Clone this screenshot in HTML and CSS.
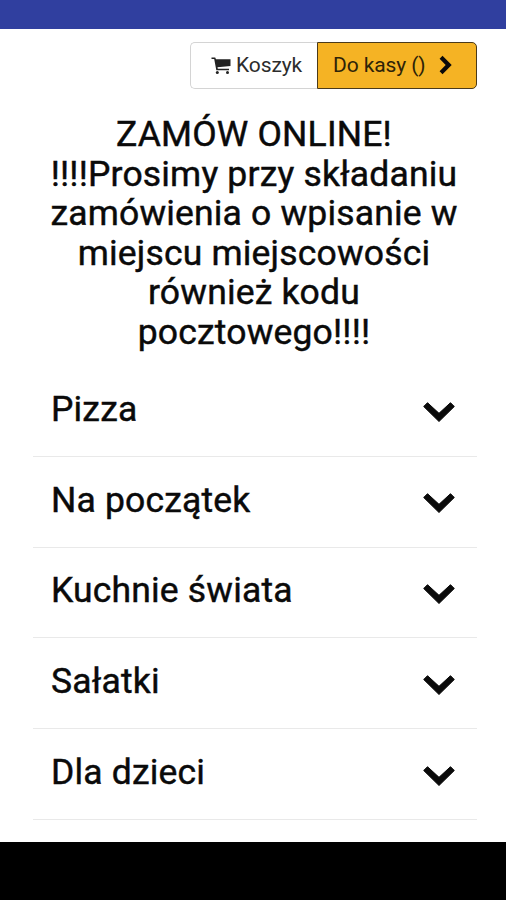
FILE: index.html
```html
<!DOCTYPE html>
<html lang="pl">
<head>
<meta charset="utf-8">
<title>Zamów online</title>
<link rel="stylesheet" href="styles.css">
</head>
<body>
<header class="status"></header>
<main class="page">
  <div class="actions">
    <button class="btn cart"><svg class="cart-icon" viewBox="0 0 20 18"><path d="M.5 .5h3.700l.8 1.700H19.500v6.800L6.500 10.300l.3 1.500H18V13.300H5.300L3.200 2H.5z"/><circle cx="6.300" cy="15.500" r="1.500"/><circle cx="16.500" cy="15.500" r="1.500"/></svg><span>Koszyk</span></button>
    <button class="btn checkout"><span>Do kasy ()</span><svg class="next" viewBox="0 0 13 20"><path d="M3.500 .8L12.700 10L3.500 19.200L.6 16.300L6.700 10L.6 3.700z"/></svg></button>
  </div>
  <h1 class="title">ZAMÓW ONLINE!<br>!!!!Prosimy przy składaniu<br>zamówienia o wpisanie w<br>miejscu miejscowości<br>również kodu<br>pocztowego!!!!</h1>
  <ul class="menu">
    <li class="item"><span>Pizza</span><svg class="chev" viewBox="0 0 32 20"><path d="M4.500 .7L16 11.300L27.500 .7L31.300 4.500L16 19.500L.7 4.500z"/></svg></li>
    <li class="item"><span>Na początek</span><svg class="chev" viewBox="0 0 32 20"><path d="M4.500 .7L16 11.300L27.500 .7L31.300 4.500L16 19.500L.7 4.500z"/></svg></li>
    <li class="item"><span>Kuchnie świata</span><svg class="chev" viewBox="0 0 32 20"><path d="M4.500 .7L16 11.300L27.500 .7L31.300 4.500L16 19.500L.7 4.500z"/></svg></li>
    <li class="item"><span>Sałatki</span><svg class="chev" viewBox="0 0 32 20"><path d="M4.500 .7L16 11.300L27.500 .7L31.300 4.500L16 19.500L.7 4.500z"/></svg></li>
    <li class="item"><span>Dla dzieci</span><svg class="chev" viewBox="0 0 32 20"><path d="M4.500 .7L16 11.300L27.500 .7L31.300 4.500L16 19.500L.7 4.500z"/></svg></li>
  </ul>
</main>
<footer class="navbar"></footer>
</body>
</html>
```
FILE: styles.css
```css
* { box-sizing: border-box; }
body { margin: 0; height: 900px; display: flex; flex-direction: column; overflow: hidden; background: #fff; color: #0a0a0a; font-family: Roboto, sans-serif; }
.status { height: 29px; flex: none; background: #303f9f; }
.page { flex: 1; min-height: 0; padding: 13px 29px 0 33px; }
.actions { display: flex; justify-content: flex-end; height: 47px; }
.btn { display: flex; align-items: center; margin: 0; font: 400 21px Roboto, sans-serif; color: #2c2c2c; height: 47px; white-space: nowrap; }
.btn span { letter-spacing: -0.1px; }
.cart { width: 127px; padding: 0 0 2px 20px; gap: 5px; background: #fff; border: 1px solid #d4d4d4; border-right: 0; border-radius: 5px 0 0 5px; }
.checkout { width: 160px; padding: 0 0 2px 15px; gap: 13px; background: #f5b324; border: 1px solid #4a3a1a; border-radius: 0 5px 5px 0; }
.checkout span { color: #2e2308; }
.cart-icon { width: 20px; height: 18px; flex: none; margin-top: 3px; fill: #222; }
.next { width: 13px; height: 20px; fill: #0a0a0a; margin-top: 1px; }
.title { margin: 26px 0 0; padding-right: 2px; font-size: 35.5px; font-weight: 400; letter-spacing: 0.17px; -webkit-text-stroke: 0.45px #0a0a0a; line-height: 39.5px; text-align: center; white-space: nowrap; }
.menu { list-style: none; margin: 14px 0 0; padding: 0; }
.item { display: flex; justify-content: space-between; align-items: center; height: 90.800px; padding: 0 22px 4px 18px; border-bottom: 1px solid #e9e9e9; font-size: 35.5px; font-weight: 400; letter-spacing: 0.17px; -webkit-text-stroke: 0.45px #0a0a0a; }
.chev { width: 32px; height: 20px; margin-top: 7px; fill: #0a0a0a; stroke: #0a0a0a; stroke-width: 1; stroke-linejoin: round; }
.navbar { height: 58px; flex: none; background: #000; }
```
